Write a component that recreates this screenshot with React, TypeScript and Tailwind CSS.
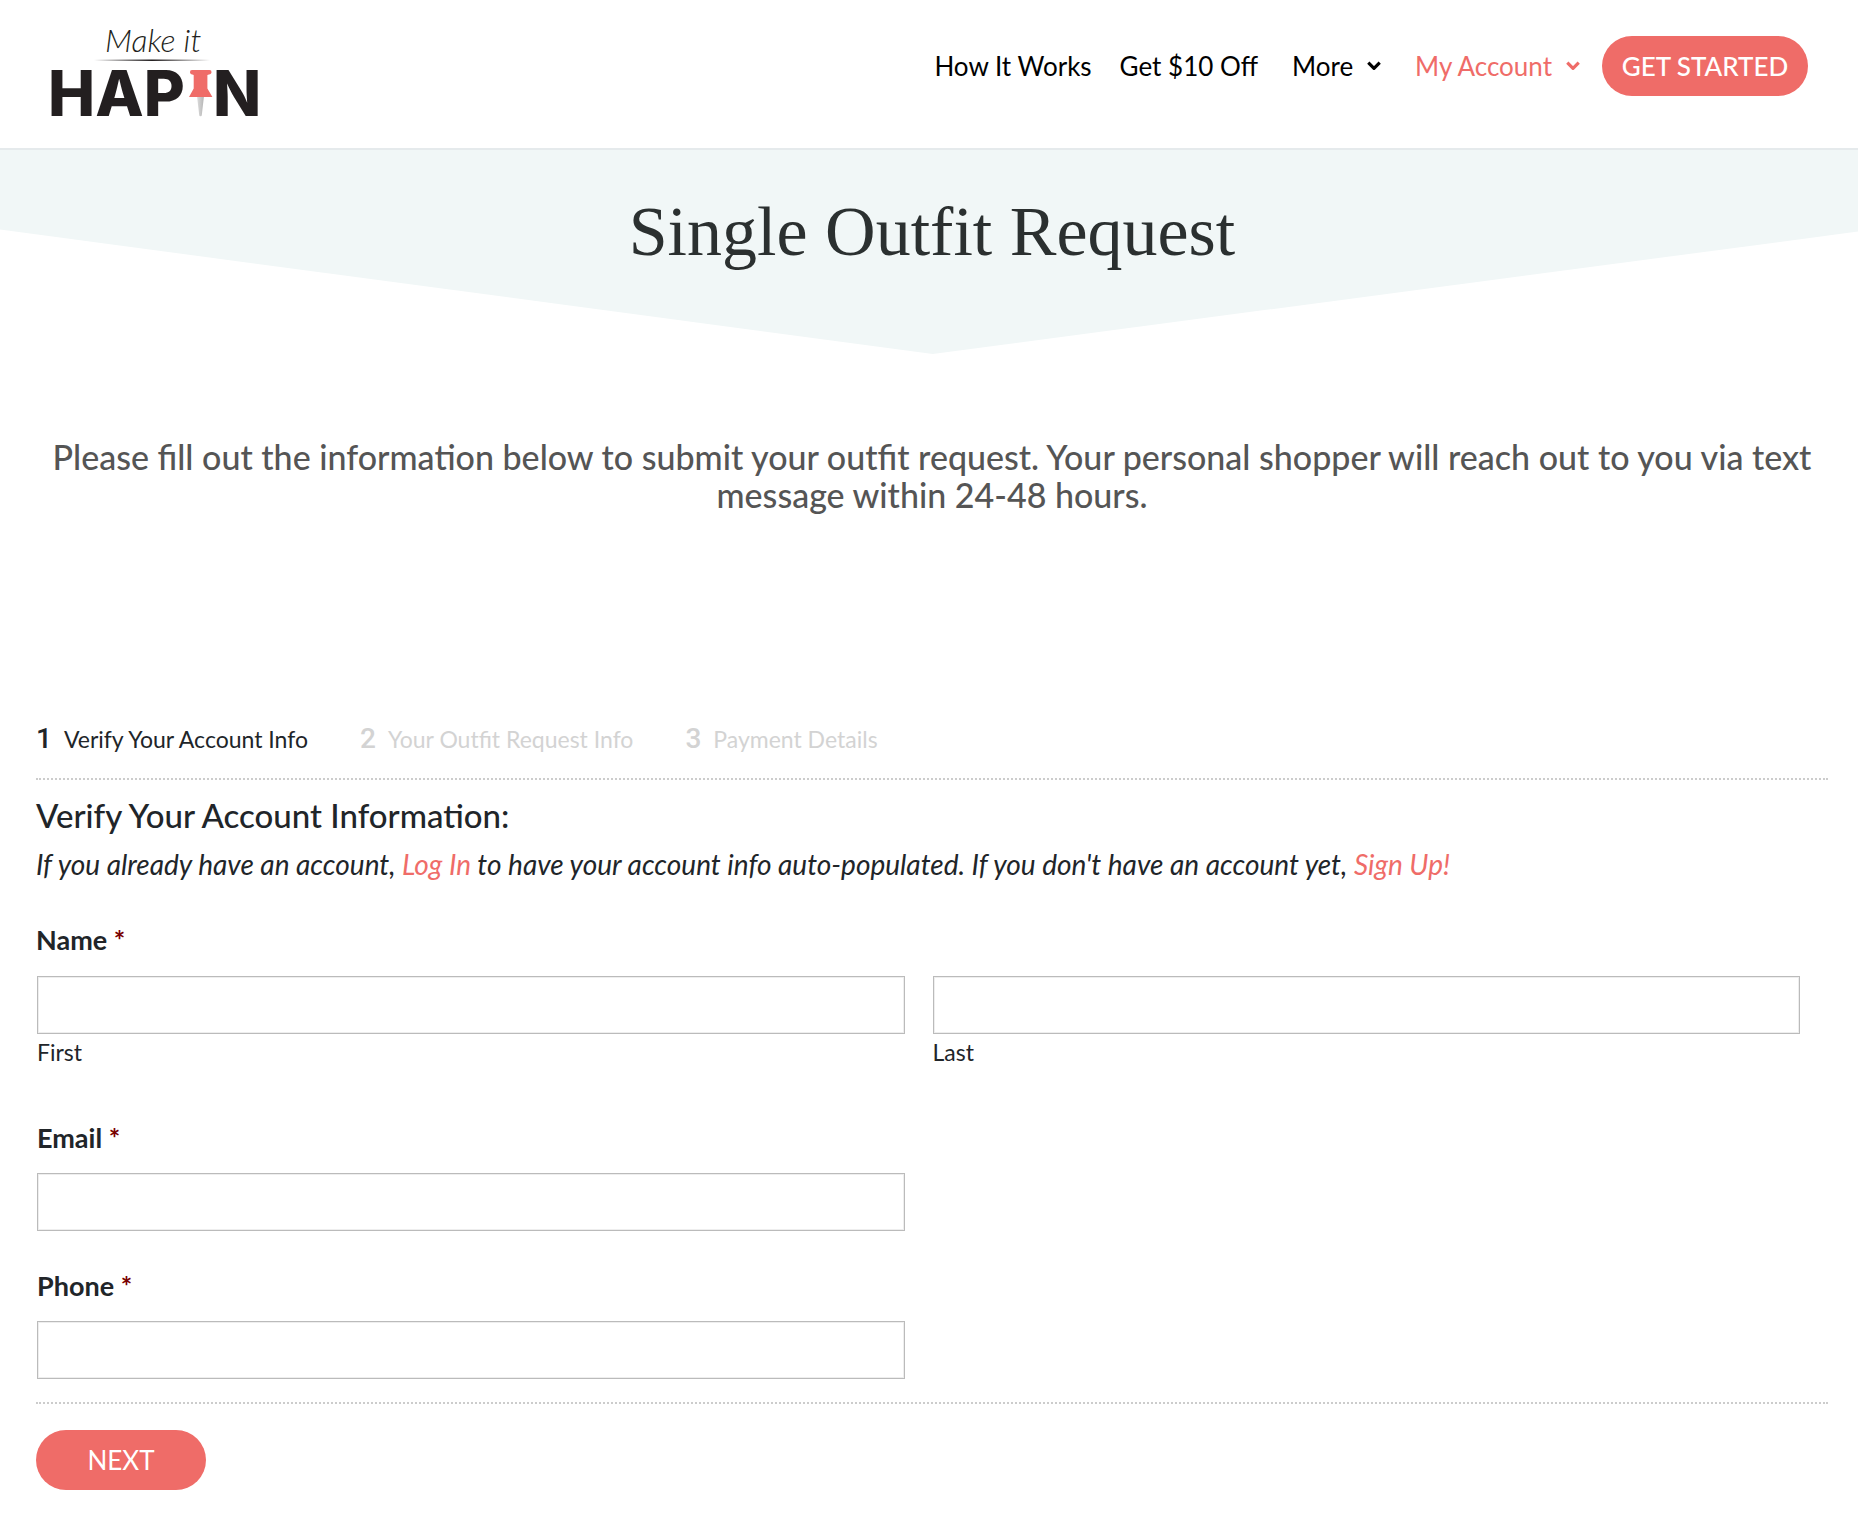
import { clsx } from 'clsx';

const steps = ['Verify Your Account Info', 'Your Outfit Request Info', 'Payment Details'];

const Logo = () => (
  <svg viewBox="-8 0 226 124" className="w-[226px] h-[124px]" role="img" aria-label="Make it HAPIN">
    <defs>
      <linearGradient id="rule">
        <stop offset="0" stopColor="#231f20" stopOpacity="0" />
        <stop offset="0.5" stopColor="#231f20" />
        <stop offset="1" stopColor="#231f20" stopOpacity="0" />
      </linearGradient>
      <linearGradient id="needle">
        <stop offset="0" stopColor="#dcdcdc" />
        <stop offset="1" stopColor="#b5b5b5" />
      </linearGradient>
    </defs>
    <text x="53" y="36" fontSize="32" fontStyle="italic" fontWeight="300" fill="#231f20" className="font-['Lato',sans-serif]">
      Make it
    </text>
    <rect x="42" y="43.5" width="116" height="1.5" fill="url(#rule)" />
    <text x="-4" y="100" fontSize="63" fontWeight="800" fill="#231f20" className="font-['Inter',sans-serif]">
      HAP
    </text>
    <path d="M145 80h7l-2.200 19a1.300 1.300 0 0 1-2.600 0z" fill="url(#needle)" />
    <path
      d="M140 54h17.500a2 2 0 0 1 2 2.200c0 1.300-1 2-2.500 2.300l-1.600.4v13.500l5 8.600h-23.400l4.700-8.600V58.900l-1.400-.4c-1.400-.3-2.300-1-2.300-2.300a2 2 0 0 1 2-2.200z"
      fill="#ef6c68"
    />
    <text x="161" y="100" fontSize="63" fontWeight="800" fill="#231f20" className="font-['Inter',sans-serif]">
      N
    </text>
  </svg>
);

const Chevron = () => (
  <svg viewBox="0 0 14 10" className="w-[14px] h-[10px]" fill="none" stroke="currentColor" strokeWidth="3.2" aria-hidden="true">
    <path d="M1.300 1.700 7 7.400l5.700-5.700" strokeLinejoin="round" />
  </svg>
);

interface TextFieldProps {
  id: string;
  type?: string;
}

const TextField = ({ id, type = 'text' }: TextFieldProps) => (
  <input
    id={id}
    type={type}
    className="block w-full h-[58px] px-3 text-2xl bg-white border border-[#bbb] shadow-[inset_0_0_0_1px_#eee]"
  />
);

const Required = () => <span className="text-[#790000]">*</span>;

const Header = () => (
  <header className="flex items-start justify-between h-[150px] pl-[44px] pr-[50px] border-b-2 border-[#e5eaec]">
    <a href="#" className="mt-4">
      <Logo />
    </a>
    <nav className="flex items-center mt-9 text-[26px] leading-[60px] text-black">
      <a href="#" className="mr-7">How It Works</a>
      <a href="#" className="mr-[34px]">Get $10 Off</a>
      <a href="#" className="flex items-center gap-[14px] mr-[34px]">
        More <Chevron />
      </a>
      <a href="#" className="flex items-center gap-[14px] mr-[22px] text-[#ef6c68]">
        My Account <Chevron />
      </a>
      <button className="h-[60px] w-[206px] rounded-full bg-[#ef6c68] text-white font-medium">
        GET STARTED
      </button>
    </nav>
  </header>
);

const App = () => {
  return (
    <div className="min-h-screen bg-white text-[#212529] font-['Lato',sans-serif]">
      <Header />

      <section className="h-[204px] pl-[6px] bg-[#f1f7f7] [clip-path:polygon(0_0,100%_0,100%_40%,50.2%_100%,0_39%)]">
        <h1 className="pt-[42px] text-center text-[70px] leading-[80px] text-[#2b3030] font-['Liberation_Serif',serif]">
          Single Outfit Request
        </h1>
      </section>

      <main className="pl-9 pr-[30px]">
        <h2 className="mt-[84px] text-center text-[34px] leading-[38px] font-medium text-[#555]">
          Please fill out the information below to submit your outfit request. Your personal shopper will reach out to
          you via text message within 24-48 hours.
        </h2>

        <form className="mt-[200px]" onSubmit={(e) => e.preventDefault()}>
          <ol className="flex gap-[52px] h-[66px] border-b-2 border-dotted border-[#ccc]">
            {steps.map((step, index) => (
              <li
                key={step}
                className={clsx('flex items-baseline gap-3 text-[23px] leading-[50px]', index > 0 && 'text-[#d3d3d3]')}
              >
                <span className="text-[28px] font-medium font-['Roboto',sans-serif]">{index + 1}</span>
                {step}
              </li>
            ))}
          </ol>

          <h3 className="mt-4 text-[33px] leading-[38px] font-medium">Verify Your Account Information:</h3>
          <p className="mt-[10px] text-[28px] leading-[40px] italic">
            If you already have an account, <a href="#" className="text-[#ef6c68]">Log In</a> to have your account info
            auto-populated. If you don't have an account yet, <a href="#" className="text-[#ef6c68]">Sign Up!</a>
          </p>

          <fieldset className="mt-9">
            <legend className="text-[27px] leading-[40px] font-bold">
              Name <Required />
            </legend>
            <div className="grid grid-cols-2 gap-7 pt-4 pl-px pr-7">
              <div>
                <TextField id="first" />
                <label htmlFor="first" className="block text-[23px] leading-[36px]">First</label>
              </div>
              <div>
                <TextField id="last" />
                <label htmlFor="last" className="block text-[23px] leading-[36px]">Last</label>
              </div>
            </div>
          </fieldset>

          <div className="grid grid-cols-2 gap-7 mt-12 pl-px pr-7">
            <div>
              <label htmlFor="email" className="block mb-[15px] text-[27px] leading-[40px] font-bold">
                Email <Required />
              </label>
              <TextField id="email" type="email" />
            </div>
          </div>

          <div className="grid grid-cols-2 gap-7 mt-[35px] pl-px pr-7">
            <div>
              <label htmlFor="phone" className="block mb-[15px] text-[27px] leading-[40px] font-bold">
                Phone <Required />
              </label>
              <TextField id="phone" type="tel" />
            </div>
          </div>

          <div className="mt-[23px] pt-[26px] pb-[26px] border-t-2 border-dotted border-[#ccc]">
            <button type="submit" className="h-[60px] w-[170px] rounded-full bg-[#ef6c68] text-white text-[26px]">
              NEXT
            </button>
          </div>
        </form>
      </main>
    </div>
  );
};

export default App;
